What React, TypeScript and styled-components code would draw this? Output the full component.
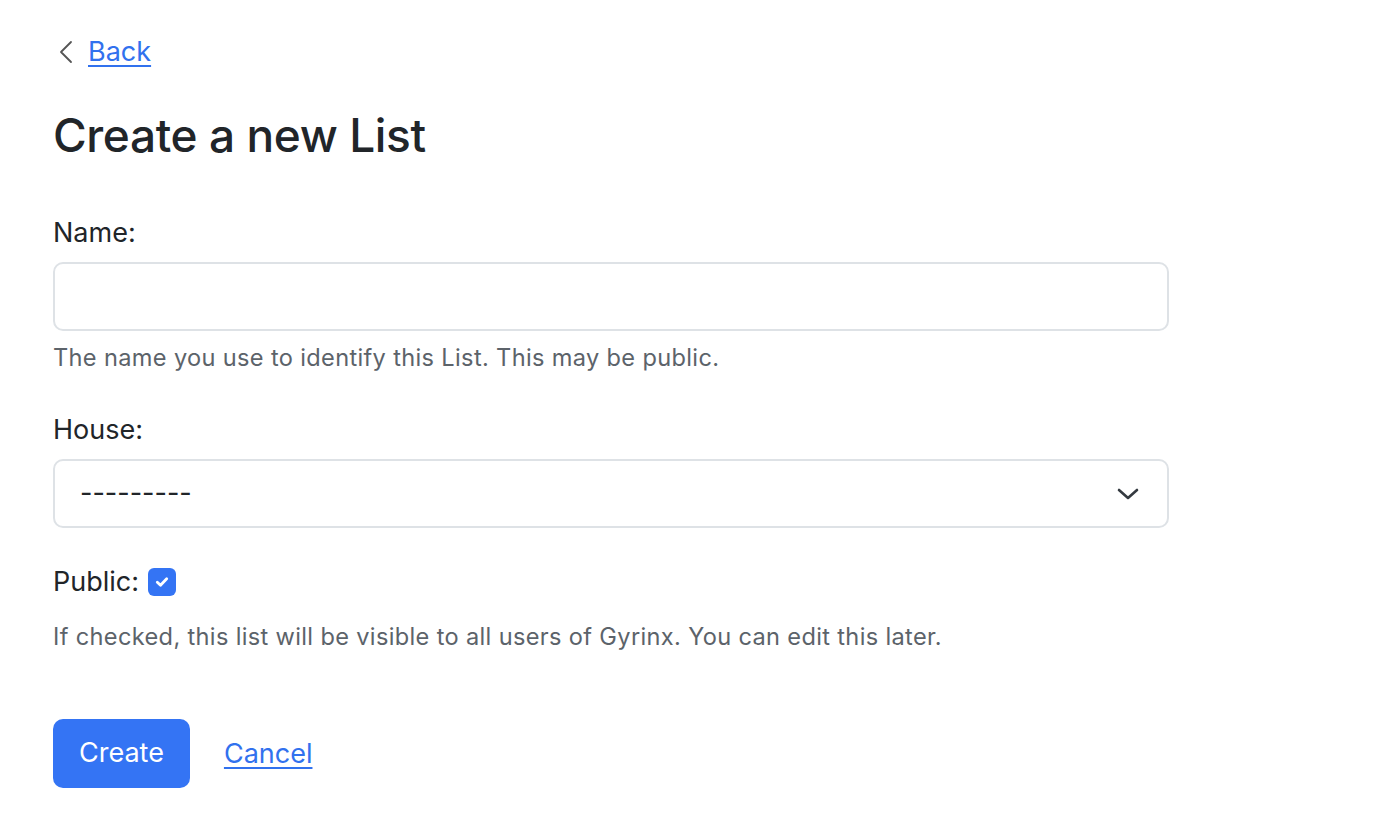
import React from "react";
import styled, { createGlobalStyle } from "styled-components";

const Global = createGlobalStyle`
  html, body { margin: 0; padding: 0; background: #ffffff; }
  body {
    font-family: Inter, "Noto Sans", "Liberation Sans", sans-serif;
    color: #212529;
    font-size: 27px;
    line-height: 1.5;
  }
  * { box-sizing: border-box; }
`;

const Page = styled.main`
  padding: 32px 53px 40px;
  max-width: 1222px;
`;

const BackRow = styled.div`
  display: flex;
  align-items: center;
  gap: 15px;
  height: 40px;
  padding-left: 6px;
`;

const TextLink = styled.a`
  color: #3171ee;
  text-decoration: underline;
  text-underline-offset: 4px;
  text-decoration-thickness: 2px;
  font-size: 27px;
  line-height: 40px;
  cursor: pointer;
`;

const Title = styled.h1`
  margin: 34px 0 0;
  font-size: 46px;
  font-weight: 500;
  line-height: 58px;
  letter-spacing: -0.4px;
  color: #212529;
`;

const Form = styled.form`
  display: flex;
  flex-direction: column;
  margin-top: 49px;
`;

const Field = styled.div<{ $gap?: number }>`
  display: flex;
  flex-direction: column;
  margin-top: ${(p) => p.$gap ?? 0}px;
`;

const Label = styled.label`
  font-size: 27px;
  line-height: 40px;
  color: #212529;
`;

const Input = styled.input`
  margin-top: 9px;
  height: 69px;
  width: 100%;
  border: 2px solid #dee2e6;
  border-radius: 10px;
  padding: 0 25px;
  font: inherit;
  outline: none;
  background: #fff;
`;

const SelectBox = styled.div`
  position: relative;
  margin-top: 9px;
`;

const Select = styled.select`
  appearance: none;
  -webkit-appearance: none;
  height: 69px;
  width: 100%;
  border: 2px solid #dee2e6;
  border-radius: 10px;
  padding: 0 70px 0 25px;
  font: inherit;
  color: #212529;
  background: #fff;
  outline: none;
`;

const Chevron = styled.svg`
  position: absolute;
  right: 30px;
  top: 50%;
  transform: translateY(-50%);
  pointer-events: none;
`;

const Help = styled.div<{ $top?: number }>`
  margin-top: ${(p) => p.$top ?? 9}px;
  font-size: 23.6px;
  line-height: 35px;
  letter-spacing: 0.34px;
  color: #5c636a;
`;

const CheckRow = styled.div`
  display: flex;
  align-items: center;
  gap: 9px;
  margin-top: 34px;
  height: 40px;
`;

const CheckBox = styled.span`
  width: 28px;
  height: 28px;
  border-radius: 6px;
  background: #3474f4;
  display: inline-flex;
  align-items: center;
  justify-content: center;
`;

const Actions = styled.div`
  display: flex;
  align-items: center;
  gap: 34px;
  margin-top: 65px;
`;

const PrimaryButton = styled.button`
  height: 69px;
  padding: 0 26px;
  border: none;
  border-radius: 10px;
  background: #3474f4;
  color: #fff;
  font: inherit;
  font-size: 27px;
  cursor: pointer;
`;

export default function App() {
  return (
    <>
      <Global />
      <Page>
        <BackRow>
          <svg width="14" height="24" viewBox="0 0 14 24" fill="none">
            <path d="M12 2 L2 12 L12 22" stroke="#555" strokeWidth="1.8" strokeLinecap="round" strokeLinejoin="round" />
          </svg>
          <TextLink>Back</TextLink>
        </BackRow>
        <Title>Create a new List</Title>
        <Form onSubmit={(e) => e.preventDefault()}>
          <Field>
            <Label htmlFor="name">Name:</Label>
            <Input id="name" type="text" />
            <Help>The name you use to identify this List. This may be public.</Help>
          </Field>
          <Field $gap={35}>
            <Label htmlFor="house">House:</Label>
            <SelectBox>
              <Select id="house" defaultValue="">
                <option value="">---------</option>
              </Select>
              <Chevron width="22" height="14" viewBox="0 0 22 14" fill="none">
                <path d="M2 3 L11 11 L20 3" stroke="#343a40" strokeWidth="2.6" strokeLinecap="round" strokeLinejoin="round" />
              </Chevron>
            </SelectBox>
          </Field>
          <CheckRow>
            <Label>Public:</Label>
            <CheckBox>
              <svg width="16" height="16" viewBox="0 0 16 16" fill="none">
                <path d="M3.3 8.3 L6.5 11.3 L12.7 4.7" stroke="#fff" strokeWidth="2.8" strokeLinecap="round" strokeLinejoin="round" />
              </svg>
            </CheckBox>
          </CheckRow>
          <Help $top={17}>If checked, this list will be visible to all users of Gyrinx. You can edit this later.</Help>
          <Actions>
            <PrimaryButton type="submit">Create</PrimaryButton>
            <TextLink>Cancel</TextLink>
          </Actions>
        </Form>
      </Page>
    </>
  );
}
